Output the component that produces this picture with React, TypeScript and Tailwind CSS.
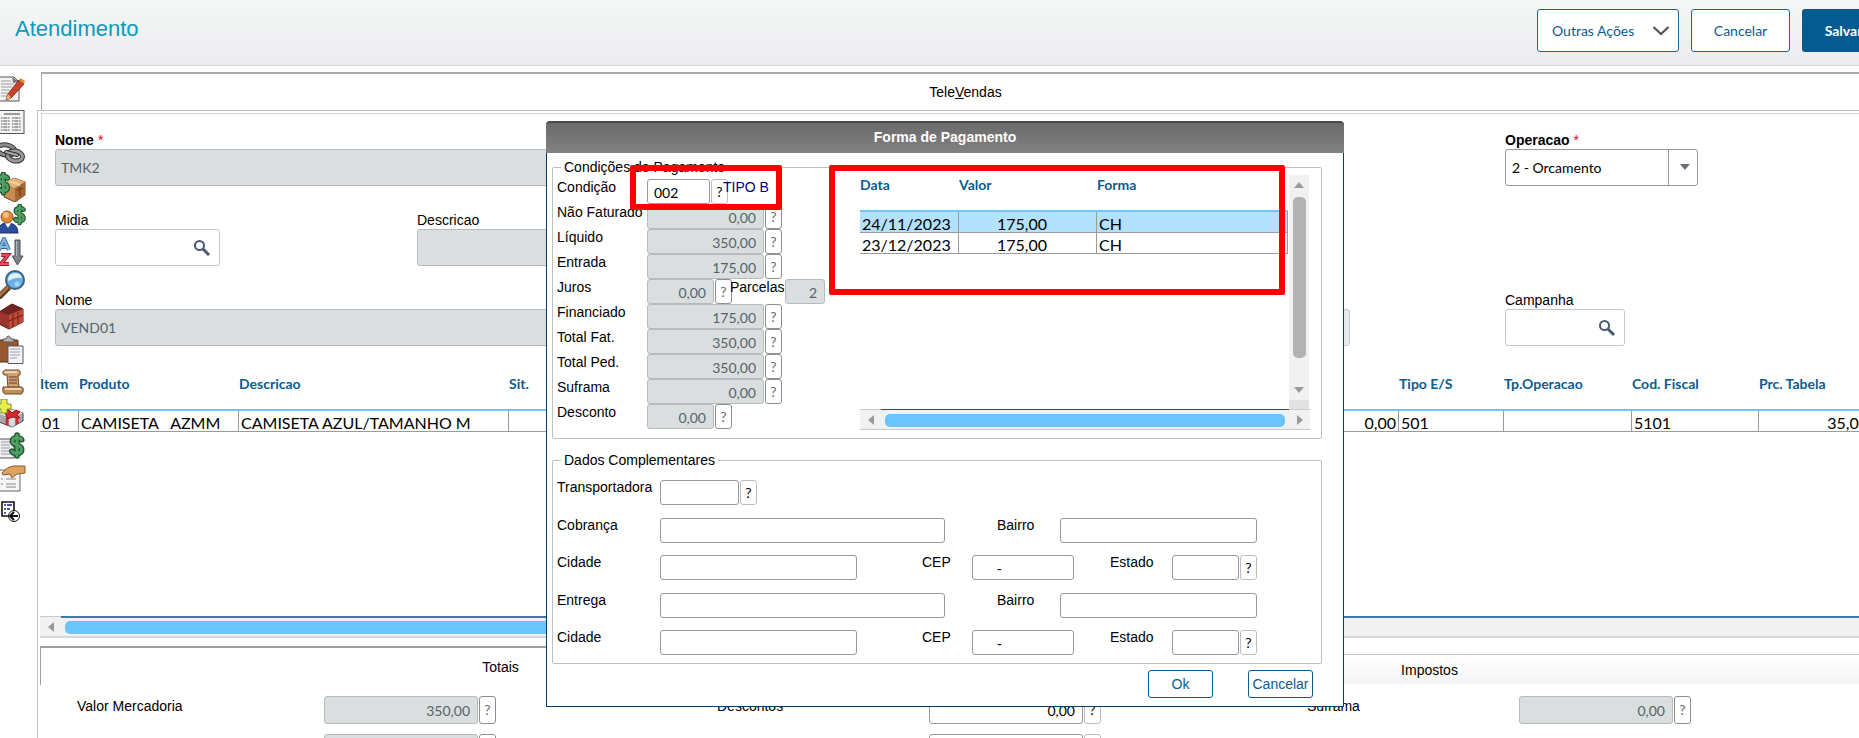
import type { ReactNode } from "react"
import clsx from "clsx"

const arial = "font-['Liberation_Sans',Arial,sans-serif]"
const lato = "font-[Lato,'Open_Sans',sans-serif]"

/* ---------- toolbar drawings ---------- */

function Dollar({ x, y, s = 1 }: { x: number; y: number; s?: number }) {
  return (
    <g transform={`translate(${x} ${y}) scale(${s})`} fill="none" strokeLinecap="round">
      <path d="M11 5C10 3 3 2 3 6.500C3 10 11 9 11 13.500C11 18 4 17.500 2.500 15M7 1V19" stroke="#23562f" strokeWidth="5" />
      <path d="M11 5C10 3 3 2 3 6.500C3 10 11 9 11 13.500C11 18 4 17.500 2.500 15M7 1V19" stroke="#4fa163" strokeWidth="2.600" />
    </g>
  )
}

const tools: { label: string; art: ReactNode }[] = [
  {
    label: "Editar",
    art: (
      <>
        <path d="M-1 3H14L19 8V27H-1Z" fill="#f4f4f4" stroke="#555" />
        <path d="M1 7H11M1 10H14M1 13H12M1 16H10M1 19H8M1 22H7" stroke="#999" />
        <path d="M12 3L19 8L13 9Z" fill="#777" />
        <path d="M19 6L24 10L11 24L6 26L8 20Z" fill="#c8452a" stroke="#7c2d1b" />
        <path d="M19 6L21 4L25 7L24 10Z" fill="#d99a2b" />
        <path d="M8 20L11 24L6 26Z" fill="#e4bc77" />
      </>
    ),
  },
  {
    label: "Planilha",
    art: (
      <>
        <rect x="-1" y="3.500" width="25" height="23" fill="#f2f2f2" stroke="#555" />
        <path d="M4 7H20" stroke="#999" strokeWidth="2" />
        <path d="M1 11H10M12 11H21M1 14H10M12 14H21M1 17H10M12 17H21M1 20H10M12 20H21M1 23H10M12 23H21" stroke="#888" strokeWidth="1.600" strokeDasharray="1.500 .8 4 .8" />
      </>
    ),
  },
  {
    label: "Vincular",
    art: (
      <g fill="none">
        <ellipse cx="6" cy="11" rx="9" ry="5" stroke="#333" strokeWidth="5" transform="rotate(10 6 11)" />
        <ellipse cx="6" cy="11" rx="9" ry="5" stroke="#8b8b8b" strokeWidth="3" transform="rotate(10 6 11)" />
        <ellipse cx="15" cy="17" rx="7.500" ry="5" stroke="#333" strokeWidth="5" transform="rotate(10 15 17)" />
        <ellipse cx="15" cy="17" rx="7.500" ry="5" stroke="#9a9a9a" strokeWidth="3" transform="rotate(10 15 17)" />
        <path d="M6 13L17 16" stroke="#333" strokeWidth="4" strokeLinecap="round" />
        <path d="M6 13L17 16" stroke="#aaa" strokeWidth="2" strokeLinecap="round" />
      </g>
    ),
  },
  {
    label: "Produtos",
    art: (
      <>
        <path d="M4 12L14 6L25 10V23L15 30L4 25Z" fill="#c98d52" stroke="#6f431d" />
        <path d="M4 12L14 6L25 10L15 16Z" fill="#e3b27a" />
        <path d="M15 16V30L25 23V10Z" fill="#a5652f" />
        <path d="M9 9L20 13" stroke="#f0d2a8" strokeWidth="2" />
        <path d="M20 24V16M17 19L20 16L23 17" stroke="#5a3415" fill="none" />
        <Dollar x={-4} y={1} s={1.05} />
      </>
    ),
  },
  {
    label: "Cliente",
    art: (
      <>
        <path d="M-1 29V23Q1 19 7 19Q18 19 18 29Z" fill="#2d4f9b" stroke="#1d3060" />
        <path d="M5 19L8 24L11 19Z" fill="#fff" />
        <circle cx="7" cy="13" r="6" fill="#e08a38" stroke="#96531b" />
        <circle cx="6" cy="11" r="3" fill="#f6bd7a" />
        <Dollar x={13} y={1} s={0.95} />
      </>
    ),
  },
  {
    label: "Ordenar",
    art: (
      <>
        <path d="M-1 13L4 2L9 13M1 10H8" stroke="#34688f" strokeWidth="4" fill="none" />
        <path d="M-1 13L4 2L9 13M1 10H8" stroke="#84bbe5" strokeWidth="2" fill="none" />
        <path d="M1 18H8L1 27H9" stroke="#9b2131" strokeWidth="4" fill="none" />
        <path d="M1 18H8L1 27H9" stroke="#ee4a58" strokeWidth="2" fill="none" />
        <path d="M15 3H20V19H23L17.500 28L12 19H15Z" fill="#7d838b" stroke="#4d5157" />
        <path d="M16.500 4V19" stroke="#b4b9bf" />
      </>
    ),
  },
  {
    label: "Pesquisar",
    art: (
      <>
        <path d="M-2 29L9 18" stroke="#5c3a22" strokeWidth="6" />
        <path d="M-2 28L9 17" stroke="#a97148" strokeWidth="3" />
        <circle cx="15" cy="11" r="9" fill="#6db0e6" stroke="#3b6285" strokeWidth="2" />
        <path d="M8 12Q8 4 15 4Q21 4 22 9Q16 8 8 12Z" fill="#dbf0fc" />
        <circle cx="17" cy="15" r="2.500" fill="#a9d6f5" />
      </>
    ),
  },
  {
    label: "Estoque",
    art: (
      <>
        <path d="M-1 10L12 2L23 7V20L9 27L-1 22Z" fill="#9c352b" stroke="#4f1511" />
        <path d="M-1 10L12 2L23 7L9 13Z" fill="#712420" />
        <path d="M9 13V27L23 20V7Z" fill="#c04a37" />
        <path d="M13 12V25M18 10V22M9 19L23 13" stroke="#661d17" />
      </>
    ),
  },
  {
    label: "Colar",
    art: (
      <>
        <rect x="-2" y="6" width="20" height="22" rx="1" fill="#99582f" stroke="#4f2b13" />
        <path d="M3 8V5H6Q8 -1 11 5H14V8Z" fill="#b5b5b5" stroke="#555" />
        <path d="M8 12H23V29.500H8Z" fill="#f5f5f8" stroke="#55555f" />
        <path d="M10 15H20M10 18H20M10 21H20M10 24H17" stroke="#9a9aa5" />
      </>
    ),
  },
  {
    label: "Script",
    art: (
      <>
        <path d="M5 3H18Q21 3 20 8H18L19 21H8L7 8H4Q1 5 5 3Z" fill="#c9a173" stroke="#6d4a29" />
        <path d="M3 20H21Q24 20 23 25Q22 28 19 27H5Q2 26 3 20Z" fill="#c08f57" stroke="#6d4a29" />
        <path d="M5 5H17M5 22H21" stroke="#efd5ae" strokeWidth="2" fill="none" />
        <path d="M9 10H17M9 13H17M9 16H17" stroke="#8f5b45" strokeWidth="1.300" />
      </>
    ),
  },
  {
    label: "Brindes",
    art: (
      <>
        <path d="M-1 15L10 10L23 14V22L12 28L-1 23Z" fill="#a9a9ab" stroke="#444" />
        <path d="M-1 15L10 10L23 14L12 19Z" fill="#e6e6e8" />
        <path d="M5 12L9 14V26L12 28L15 26V17L19 13L15 11L12 14L9 11Z" fill="#d9d9dc" />
        <path d="M4 12L9 11L12 14L16 11L20 13L17 16L20 19L13 18L7 20L6 16Z" fill="#d42a2b" stroke="#8c1517" />
        <path d="M7 20V26M17 19V25" stroke="#cf2a2b" strokeWidth="3" />
        <path d="M1 0H7V5H11V10H7V14H1V10H-3V5H1Z" fill="#e7f04d" stroke="#83902a" />
      </>
    ),
  },
  {
    label: "Financeiro",
    art: (
      <>
        <rect x="-1" y="7" width="15" height="19" fill="#f0f0f3" stroke="#55555f" />
        <path d="M1 10H10M1 13H10M1 16H10M1 19H12M1 22H12" stroke="#9a9aa5" />
        <Dollar x={9} y={2} s={1.15} />
      </>
    ),
  },
  {
    label: "Assinar",
    art: (
      <>
        <path d="M-1 6H20V27H-1Z" fill="#f6f6f6" stroke="#666" />
        <path d="M1 15H3M6 15H16M1 20H3M6 20H16M6 23H16" stroke="#888" />
        <path d="M2 9Q8 2 14 2H25V9L17 10L12 14L10 10L3 11Z" fill="#dea361" stroke="#8a5a29" />
      </>
    ),
  },
  {
    label: "Sair",
    art: (
      <>
        <path d="M2 5H14V19H2Z" fill="#fff" stroke="#111" strokeWidth="1.600" />
        <path d="M4 8H6M7 8H12M4 12H6M7 12H10M4 16H6" stroke="#1b1b8f" strokeWidth="1.400" />
        <circle cx="14" cy="19" r="5.500" fill="#fff" stroke="#111" />
        <path d="M10 19H18M14 15L10 19L14 23" stroke="#111" strokeWidth="2" fill="none" />
      </>
    ),
  },
]

function Toolbar() {
  return (
    <nav className="mt-[7px] grid h-[455px] w-[37px] shrink-0 auto-rows-fr">
      {tools.map((t) => (
        <button key={t.label} aria-label={t.label} className="flex items-center">
          <svg width="26" height="30" viewBox="0 0 26 30">{t.art}</svg>
        </button>
      ))}
    </nav>
  )
}

/* ---------- small pieces ---------- */

function Arrow({ dir }: { dir: "left" | "right" | "up" | "down" }) {
  const paths = { left: "M9 1V11L3 6Z", right: "M3 1V11L9 6Z", up: "M1 9H11L6 3Z", down: "M1 3H11L6 9Z" }
  return (
    <svg width="12" height="12" viewBox="0 0 12 12" className="shrink-0">
      <path d={paths[dir]} fill="#9a9a9a" />
    </svg>
  )
}

function Help({ dim, tall }: { dim?: boolean; tall?: boolean }) {
  return (
    <button
      className={clsx(
        "ml-px w-[17px] shrink-0 rounded-[3px] border bg-white text-sm leading-4",
        lato,
        tall ? "h-7" : "h-[25px]",
        dim ? "border-[#8f8f8f] text-[#6b6b6b]" : "border-[#bdbdbd] text-black"
      )}
    >
      ?
    </button>
  )
}

function Search() {
  return (
    <svg width="18" height="18" viewBox="0 0 18 18" fill="none">
      <circle cx="6.500" cy="6.500" r="4.500" stroke="#4a5a6c" strokeWidth="2" />
      <path d="M10 10L16 16" stroke="#4a5a6c" strokeWidth="3" />
    </svg>
  )
}

function Label({ id, required, children }: { id: string; required?: boolean; children: ReactNode }) {
  return (
    <label htmlFor={id} className={clsx("block h-[17px] leading-4", required && "font-bold")}>
      {children}
      {required && <span className="ml-1 font-normal text-red-600">*</span>}
    </label>
  )
}

const locked = "h-[37px] w-full rounded-[3px] border border-[#b5bcbe] bg-[#dadede] px-[5px] text-sm text-[#566369]"

function SearchField({ id, width }: { id: string; width: string }) {
  return (
    <div className={clsx("flex h-[37px] items-center rounded-[3px] border border-[#c3c7c9] bg-white pr-2", width)}>
      <input id={id} className={clsx("h-full min-w-0 flex-1 px-[6px] text-sm outline-none", lato)} />
      <button aria-label="Pesquisar">
        <Search />
      </button>
    </div>
  )
}

/* ---------- page ---------- */

function Header() {
  return (
    <header className="flex h-[66px] items-start justify-between border-b border-[#d6d6d8] bg-linear-to-b from-[#f5f7f6] to-[#ececef] pl-[15px]">
      <h1 className="pt-[15px] text-[22px] leading-7 text-[#0c9abe]">Atendimento</h1>
      <div className={clsx("-mr-[30px] flex shrink-0 gap-3 pt-[9px] text-sm", lato)}>
        <button className="flex h-[43px] w-[142px] items-center justify-between rounded-[3px] border border-[#1c6796] bg-white pr-2 pl-[14px] text-[#0a5c92]">
          Outras Ações
          <svg width="18" height="12" viewBox="0 0 18 12" fill="none">
            <path d="M1.500 2L9 9L16.500 2" stroke="#555" strokeWidth="2.200" />
          </svg>
        </button>
        <button className="h-[43px] w-[99px] rounded-[3px] border border-[#1c6796] bg-white text-[#0a5c92]">Cancelar</button>
        <button className="h-[43px] w-[87px] rounded-[3px] bg-[#045b91] pr-1 font-bold text-white">Salvar</button>
      </div>
    </header>
  )
}

function CustomerForm() {
  return (
    <div className="ml-[3px] mt-[2px] grid grid-cols-[362px_1fr_384px] gap-y-[26px] border-t border-l border-[#d3d5d5] pt-[18px] pb-[28px] pl-[13px]">
      <div className="col-span-2 pr-[415px]">
        <Label id="nome" required>Nome</Label>
        <input id="nome" readOnly defaultValue="TMK2" className={clsx(locked, lato)} />
      </div>
      <div>
        <Label id="operacao" required>Operacao</Label>
        <div className="flex h-[37px] w-[193px] items-stretch rounded-[3px] border border-[#93999c]">
          <select
            id="operacao"
            className={clsx("w-[164px] appearance-none border-r border-[#93999c] px-[6px] text-sm outline-none", lato)}
          >
            <option>2 - Orcamento</option>
          </select>
          <svg viewBox="0 0 28 35" className="w-7">
            <path d="M11 14H21L16 20Z" fill="#667180" />
          </svg>
        </div>
      </div>

      <div>
        <Label id="midia">Midia</Label>
        <SearchField id="midia" width="w-[165px]" />
      </div>
      <div className="col-span-2 pr-[800px]">
        <Label id="descricao">Descricao</Label>
        <input id="descricao" readOnly className={clsx(locked, lato)} />
      </div>

      <div className="col-span-2 flex gap-6 pr-[155px]">
        <div className="flex-1">
          <Label id="vendedor">Nome</Label>
          <input id="vendedor" readOnly defaultValue="VEND01" className={clsx(locked, lato)} />
        </div>
        <input
          aria-label="Contato"
          readOnly
          className="mt-[17px] h-[37px] w-[300px] rounded-[3px] border border-[#c9cdd1] bg-[#e6eaef]"
        />
      </div>
      <div>
        <Label id="campanha">Campanha</Label>
        <SearchField id="campanha" width="w-[120px]" />
      </div>
    </div>
  )
}

const columns = [
  { title: "Item", value: "01", width: "w-[39px]" },
  { title: "Produto", value: "CAMISETA   AZMM", width: "w-[160px]" },
  { title: "Descricao", value: "CAMISETA AZUL/TAMANHO M", width: "w-[270px]" },
  { title: "Sit.", value: "", width: "w-[60px]" },
  { title: "", value: "0,00", width: "", right: true },
  { title: "Tipo E/S", value: "501", width: "w-[105px]" },
  { title: "Tp.Operacao", value: "", width: "w-[128px]" },
  { title: "Cod. Fiscal", value: "5101", width: "w-[127px]" },
  { title: "Prc. Tabela", value: "35,00", width: "w-[130px]", right: true },
]

const th = "border-b-2 border-[#6cc5fd] p-0 pb-[15px] text-left text-sm font-bold whitespace-nowrap text-[#0a5c92]"
const td = "h-[21px] border-r border-b border-[#9b9b9b] p-0 pt-[3px] pl-[2px] text-base leading-[17px] whitespace-pre text-black"

function ItemsGrid() {
  return (
    <div className="ml-[2px]">
      <div className="h-[242px]">
        <table className={clsx("w-full table-fixed border-separate border-spacing-0", lato)}>
          <thead>
            <tr>
              {columns.map((c, i) => (
                <th key={i} className={clsx(th, "h-[37px]", c.width)}>{c.title}</th>
              ))}
            </tr>
          </thead>
          <tbody>
            <tr>
              {columns.map((c, i) => (
                <td key={i} className={clsx(td, c.right && "text-right", i === 8 ? "pr-5" : "pr-[2px]")}>
                  {c.value}
                </td>
              ))}
            </tr>
          </tbody>
        </table>
      </div>
      <div className="flex h-[22px] items-stretch border-b-2 border-[#d3d7d7] bg-[#f1f1f1]">
        <div className="flex w-[21px] items-center justify-center border-t border-[#c8c8c8]">
          <Arrow dir="left" />
        </div>
        <div className="flex-1 border-t-2 border-[#3b7ba6] px-1 pt-[3px]">
          <div className="h-[13px] w-1/2 rounded-[5px] bg-[#6cc4fd]" />
        </div>
      </div>
    </div>
  )
}

function Amount({ id, label, value, gap, open }: { id: string; label: string; value: string; gap: string; open?: boolean }) {
  return (
    <div className="flex">
      <label htmlFor={id} className={clsx("shrink-0 pt-[2px] leading-4", gap)}>{label}</label>
      <input
        id={id}
        defaultValue={value}
        readOnly={!open}
        className={clsx(
          "h-7 w-[154px] rounded-[3px] border px-[7px] text-right text-sm",
          lato,
          open ? "border-[#93999c] bg-white text-black" : "border-[#b5bcbe] bg-[#dadede] text-[#566369]"
        )}
      />
      <Help dim={!open} tall />
    </div>
  )
}

function Totals() {
  return (
    <section className="mt-2 ml-[2px]">
      <div className="grid grid-cols-[920px_1fr]">
        <button className="h-[39px] border-t-2 border-l border-[#a0a0a0] text-center">Totais</button>
        <button className="mt-2 mb-px border-t border-[#c6c6c6] bg-linear-to-b from-white to-[#f5f5f5] pl-[10px] text-center">
          Impostos
        </button>
      </div>
      <div className="grid grid-cols-[640px_590px_1fr] gap-y-[10px] pt-[11px] pl-[37px]">
        <Amount id="mercadoria" label="Valor Mercadoria" value="350,00" gap="w-[247px]" />
        <Amount id="descontos" label="Descontos" value="0,00" gap="w-[212px]" open />
        <Amount id="suframa" label="Suframa" value="0,00" gap="w-[212px]" />
        <Amount id="acrescimo" label="Acréscimo" value="0,00" gap="w-[247px]" />
        <Amount id="frete" label="Valor do Frete" value="0,00" gap="w-[212px]" open />
      </div>
    </section>
  )
}

/* ---------- payment dialog ---------- */

const rows = [
  { label: "Não Faturado", value: "0,00" },
  { label: "Líquido", value: "350,00" },
  { label: "Entrada", value: "175,00" },
  { label: "Juros", value: "0,00", short: true, parcels: "2" },
  { label: "Financiado", value: "175,00" },
  { label: "Total Fat.", value: "350,00" },
  { label: "Total Ped.", value: "350,00" },
  { label: "Suframa", value: "0,00" },
  { label: "Desconto", value: "0,00", short: true },
]

const lockedSmall = "h-[25px] rounded-[3px] border border-[#b5bcbe] bg-[#dadede] px-[7px] pt-[2px] text-right text-sm text-[#566369]"
const box = "h-[25px] rounded-[3px] border border-[#93999c] bg-white px-[6px] pt-[2px] text-sm outline-none"

function Conditions() {
  return (
    <div className="w-[290px] shrink-0">
      <div className="flex">
        <label htmlFor="cond" className="w-[90px] shrink-0 leading-4">Condição</label>
        <input id="cond" defaultValue="002" className={clsx(box, lato, "w-[63px]")} />
        <Help />
        <span className="-ml-[5px] leading-4 text-[#000080]">TIPO B</span>
      </div>
      {rows.map((r) => (
        <div key={r.label} className="flex">
          <label htmlFor={`c-${r.label}`} className="w-[90px] shrink-0 leading-4 whitespace-nowrap">{r.label}</label>
          <input
            id={`c-${r.label}`}
            readOnly
            defaultValue={r.value}
            className={clsx(lockedSmall, lato, r.short ? "w-[67px]" : "w-[117px]")}
          />
          <Help dim />
          {r.parcels && (
            <>
              <label htmlFor="parcelas" className="-ml-[2px] w-[55px] leading-4">Parcelas</label>
              <input id="parcelas" readOnly defaultValue={r.parcels} className={clsx(lockedSmall, lato, "w-10")} />
            </>
          )}
        </div>
      ))}
    </div>
  )
}

const installments = [
  { date: "24/11/2023", value: "175,00", kind: "CH", active: true },
  { date: "23/12/2023", value: "175,00", kind: "CH", active: false },
]

function Installments() {
  return (
    <div className="-mt-1 ml-[13px] w-[450px]">
      <div className="flex h-[234px]">
        <div className="w-[429px]">
          <table className={clsx("w-[428px] table-fixed border-separate border-spacing-0", lato)}>
            <thead>
              <tr>
                <th className={clsx(th, "h-[35px] w-[99px]")}>Data</th>
                <th className={clsx(th, "h-[35px] w-[138px]")}>Valor</th>
                <th className={clsx(th, "h-[35px]")}>Forma</th>
              </tr>
            </thead>
            <tbody>
              {installments.map((i) => (
                <tr key={i.date} className={i.active ? "bg-[#b4e1fd]" : "bg-white"}>
                  <td className={td}>{i.date}</td>
                  <td className={clsx(td, "pr-[49px] text-right")}>{i.value}</td>
                  <td className={td}>{i.kind}</td>
                </tr>
              ))}
            </tbody>
          </table>
        </div>
        <div className="flex w-5 flex-col items-center justify-between border-b-9 border-[#e2e2e2] bg-[#f1f1f1] py-1">
          <Arrow dir="up" />
          <div className="mb-5 h-[161px] w-[13px] rounded-[5px] bg-[#b2b2b2]" />
          <Arrow dir="down" />
        </div>
      </div>
      <div className="flex h-[21px] items-stretch border-b border-[#c9c9c9] bg-[#f1f1f1]">
        <div className="flex w-[21px] items-center justify-center border-t border-[#c9c9c9]">
          <Arrow dir="left" />
        </div>
        <div className="flex-1 border-t border-[#0a5c92] px-1 pt-[4px]">
          <div className="h-[13px] rounded-[5px] bg-[#6cc4fd]" />
        </div>
        <div className="flex w-[21px] items-center justify-center border-t border-[#c9c9c9]">
          <Arrow dir="right" />
        </div>
      </div>
    </div>
  )
}

function AddressRows({ name }: { name: string }) {
  return (
    <>
      <div className="flex">
        <label htmlFor={`${name}-end`} className="w-[103px] leading-[14px]">{name}</label>
        <input id={`${name}-end`} className={clsx(box, "w-[285px]")} />
        <label htmlFor={`${name}-bairro`} className="ml-[52px] w-[63px] leading-[14px]">Bairro</label>
        <input id={`${name}-bairro`} className={clsx(box, "w-[197px]")} />
      </div>
      <div className="flex">
        <label htmlFor={`${name}-cidade`} className="w-[103px] leading-[14px]">Cidade</label>
        <input id={`${name}-cidade`} className={clsx(box, "w-[197px]")} />
        <label htmlFor={`${name}-cep`} className="ml-[65px] w-[50px] leading-[14px]">CEP</label>
        <input id={`${name}-cep`} defaultValue="-" className={clsx(box, "w-[102px] pl-6")} />
        <label htmlFor={`${name}-uf`} className="ml-[36px] w-[62px] leading-[14px]">Estado</label>
        <input id={`${name}-uf`} className={clsx(box, "w-[67px]")} />
        <Help />
      </div>
    </>
  )
}

function PaymentDialog() {
  return (
    <div role="dialog" aria-label="Forma de Pagamento" className="absolute top-[121px] left-[546px] w-[798px]">
      <h2 className="h-8 rounded-t-[4px] border-t-2 border-[#4a4a4a] bg-linear-to-b from-[#6b6b6b] to-[#818181] text-center font-bold leading-[29px] text-white">
        Forma de Pagamento
      </h2>
      <div className="border border-t-0 border-[#003e6d] bg-white pt-[6px] pr-[21px] pb-2 pl-[5px]">
        <fieldset className="flex h-[280px] rounded-[2px] border border-[#bfc1c1] pt-1 pl-1">
          <legend className="ml-[4px] px-[3px] leading-4">Condições do Pagamento</legend>
          <div className="flex">
            <Conditions />
            <Installments />
          </div>
        </fieldset>

        <fieldset className="mt-[13px] h-[212px] rounded-[2px] border border-[#bfc1c1] pt-3 pl-1">
          <legend className="ml-[4px] px-[3px] leading-4">Dados Complementares</legend>
          <div className="flex h-[175px] flex-col justify-between">
            <div className="flex">
              <label htmlFor="transp" className="w-[103px] leading-[14px]">Transportadora</label>
              <input id="transp" className={clsx(box, "w-[79px]")} />
              <Help />
            </div>
            <AddressRows name="Cobrança" />
            <AddressRows name="Entrega" />
          </div>
        </fieldset>

        <div className="mt-[6px] flex justify-end gap-[35px] pr-[9px]">
          <button className="h-7 w-[65px] rounded-[3px] border border-[#0a5c92] text-[#0a5c92]">Ok</button>
          <button className="h-7 w-[65px] rounded-[3px] border border-[#0a5c92] text-[#0a5c92]">Cancelar</button>
        </div>
      </div>

      {/* red markers over the condition code and the installments */}
      <div className="pointer-events-none absolute top-[44px] left-[84px] h-[45px] w-[152px] rounded-[2px] border-6 border-[#ff0000]" />
      <div className="pointer-events-none absolute top-[44px] left-[283px] h-[130px] w-[456px] rounded-[2px] border-6 border-[#ff0000]" />
    </div>
  )
}

export default function App() {
  return (
    <div className={clsx("relative h-screen overflow-hidden bg-white text-sm text-black", arial)}>
      <Header />
      <div className="flex">
        <Toolbar />
        <main className="-mr-[30px] min-w-0 flex-1 pt-[6px]">
          <div className="ml-1 flex h-[38px] items-center justify-center border-t-2 border-l border-[#a9a9a9]">
            <button>
              Tele<u>V</u>endas
            </button>
          </div>
          <div className="min-h-[640px] border-t border-l border-[#c2c2c2]">
            <CustomerForm />
            <ItemsGrid />
            <Totals />
          </div>
        </main>
      </div>
      <PaymentDialog />
    </div>
  )
}
